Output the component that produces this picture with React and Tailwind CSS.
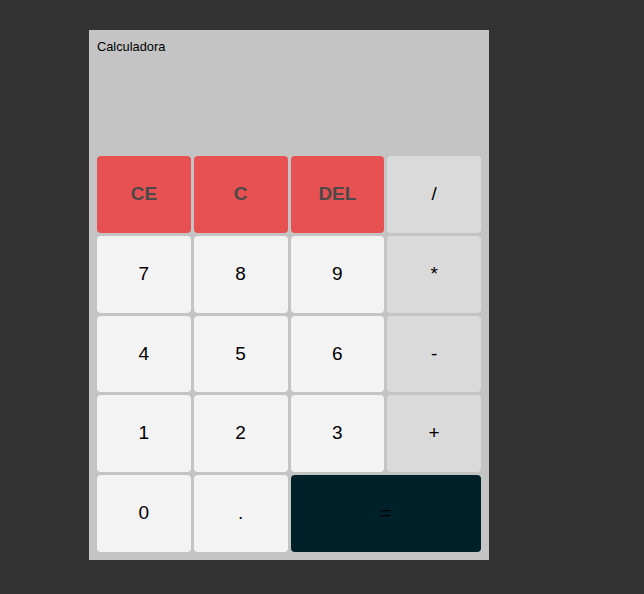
const keys = [
  { label: 'CE', kind: 'danger' },
  { label: 'C', kind: 'danger' },
  { label: 'DEL', kind: 'danger' },
  { label: '/', kind: 'op' },
  { label: '7' },
  { label: '8' },
  { label: '9' },
  { label: '*', kind: 'op' },
  { label: '4' },
  { label: '5' },
  { label: '6' },
  { label: '-', kind: 'op' },
  { label: '1' },
  { label: '2' },
  { label: '3' },
  { label: '+', kind: 'op' },
  { label: '0' },
  { label: '.' },
  { label: '=', kind: 'equals' },
];

const styles = {
  danger: 'bg-[#e85151] text-[#4a4a4a] font-bold',
  op: 'bg-[#dadada] text-black',
  equals: 'bg-[#00202a] text-black col-span-2',
  num: 'bg-[#f3f3f3] text-black',
};

export default function App() {
  return (
    <div className="min-h-screen bg-[#333333] pl-[89px] pt-[30px] font-['Liberation_Sans',Arial,sans-serif]">
      <div className="w-[400px] bg-[#c4c4c4] p-2 flex flex-col gap-[3px]">
        {/* display */}
        <div className="h-[115px] text-[12.8px] leading-[15px] pt-[1px] text-black">Calculadora</div>

        {/* keypad */}
        <div className="grid grid-cols-4 gap-[3px]">
          {keys.map((k) => (
            <button
              key={k.label}
              className={`h-[76.75px] rounded-[4px] flex items-center justify-center text-[19px] ${styles[k.kind || 'num']}`}
            >
              {k.label}
            </button>
          ))}
        </div>
      </div>
    </div>
  );
}
